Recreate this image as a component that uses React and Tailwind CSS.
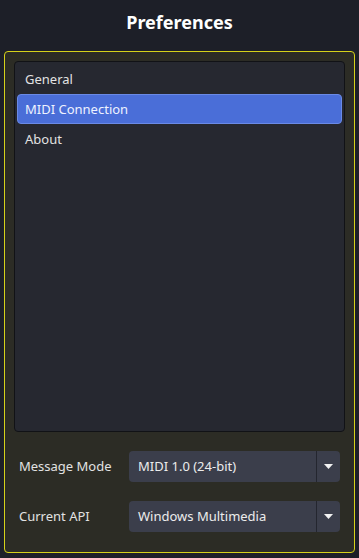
export default function App() {
  const items = ['General', 'MIDI Connection', 'About']
  const selected = 1

  const fields = [
    { label: 'Message Mode', value: 'MIDI 1.0 (24-bit)' },
    { label: 'Current API', value: 'Windows Multimedia' },
  ]

  return (
    <div
      className="w-[359px] h-[558px] bg-[#1d1f28] flex flex-col text-[#e2e2e2]"
      style={{ fontFamily: '"Noto Sans", "Open Sans", sans-serif' }}
    >
      {/* Title */}
      <div className="h-[51px] flex items-center justify-center pb-[6px]">
        <span className="text-[18px] font-bold text-white">Preferences</span>
      </div>

      {/* Panel */}
      <div className="mx-[4px] h-[502px] border border-[#d6d21a] rounded-[4px] bg-[#2c2c25] p-[9px] flex flex-col">
        <div className="h-[371px] bg-[#262830] border border-[#111216] rounded-[4px] p-[2px] flex flex-col">
          {items.map((it, i) => (
            <div
              key={it}
              className={`h-[30px] flex items-center px-[7px] pt-[2px] text-[13px] rounded-[4px] border ${
                i === selected ? 'bg-[#4a6ed8] border-[#6a8ae6] text-[#eef2ff]' : 'border-transparent'
              }`}
            >
              {it}
            </div>
          ))}
        </div>

        <div className="flex flex-col gap-[19px] pt-[19px] px-[5px]">
          {fields.map(f => (
            <div key={f.label} className="flex items-center">
              <div className="w-[110px] text-[13px] pt-[1px]">{f.label}</div>
              <div className="flex-1 h-[31px] bg-[#3b3e4b] rounded-[4px] flex items-center">
                <div className="flex-1 pl-[9px] pt-[1px] text-[13px] text-[#ececec]">{f.value}</div>
                <div className="w-px h-[31px] bg-[#24262f]" />
                <div className="w-[23px] flex items-center justify-center">
                  <svg width="9" height="5" viewBox="0 0 9 5">
                    <path d="M0 0 L9 0 L4.5 5 Z" fill="#f2f2f2" />
                  </svg>
                </div>
              </div>
            </div>
          ))}
        </div>
      </div>
    </div>
  )
}
